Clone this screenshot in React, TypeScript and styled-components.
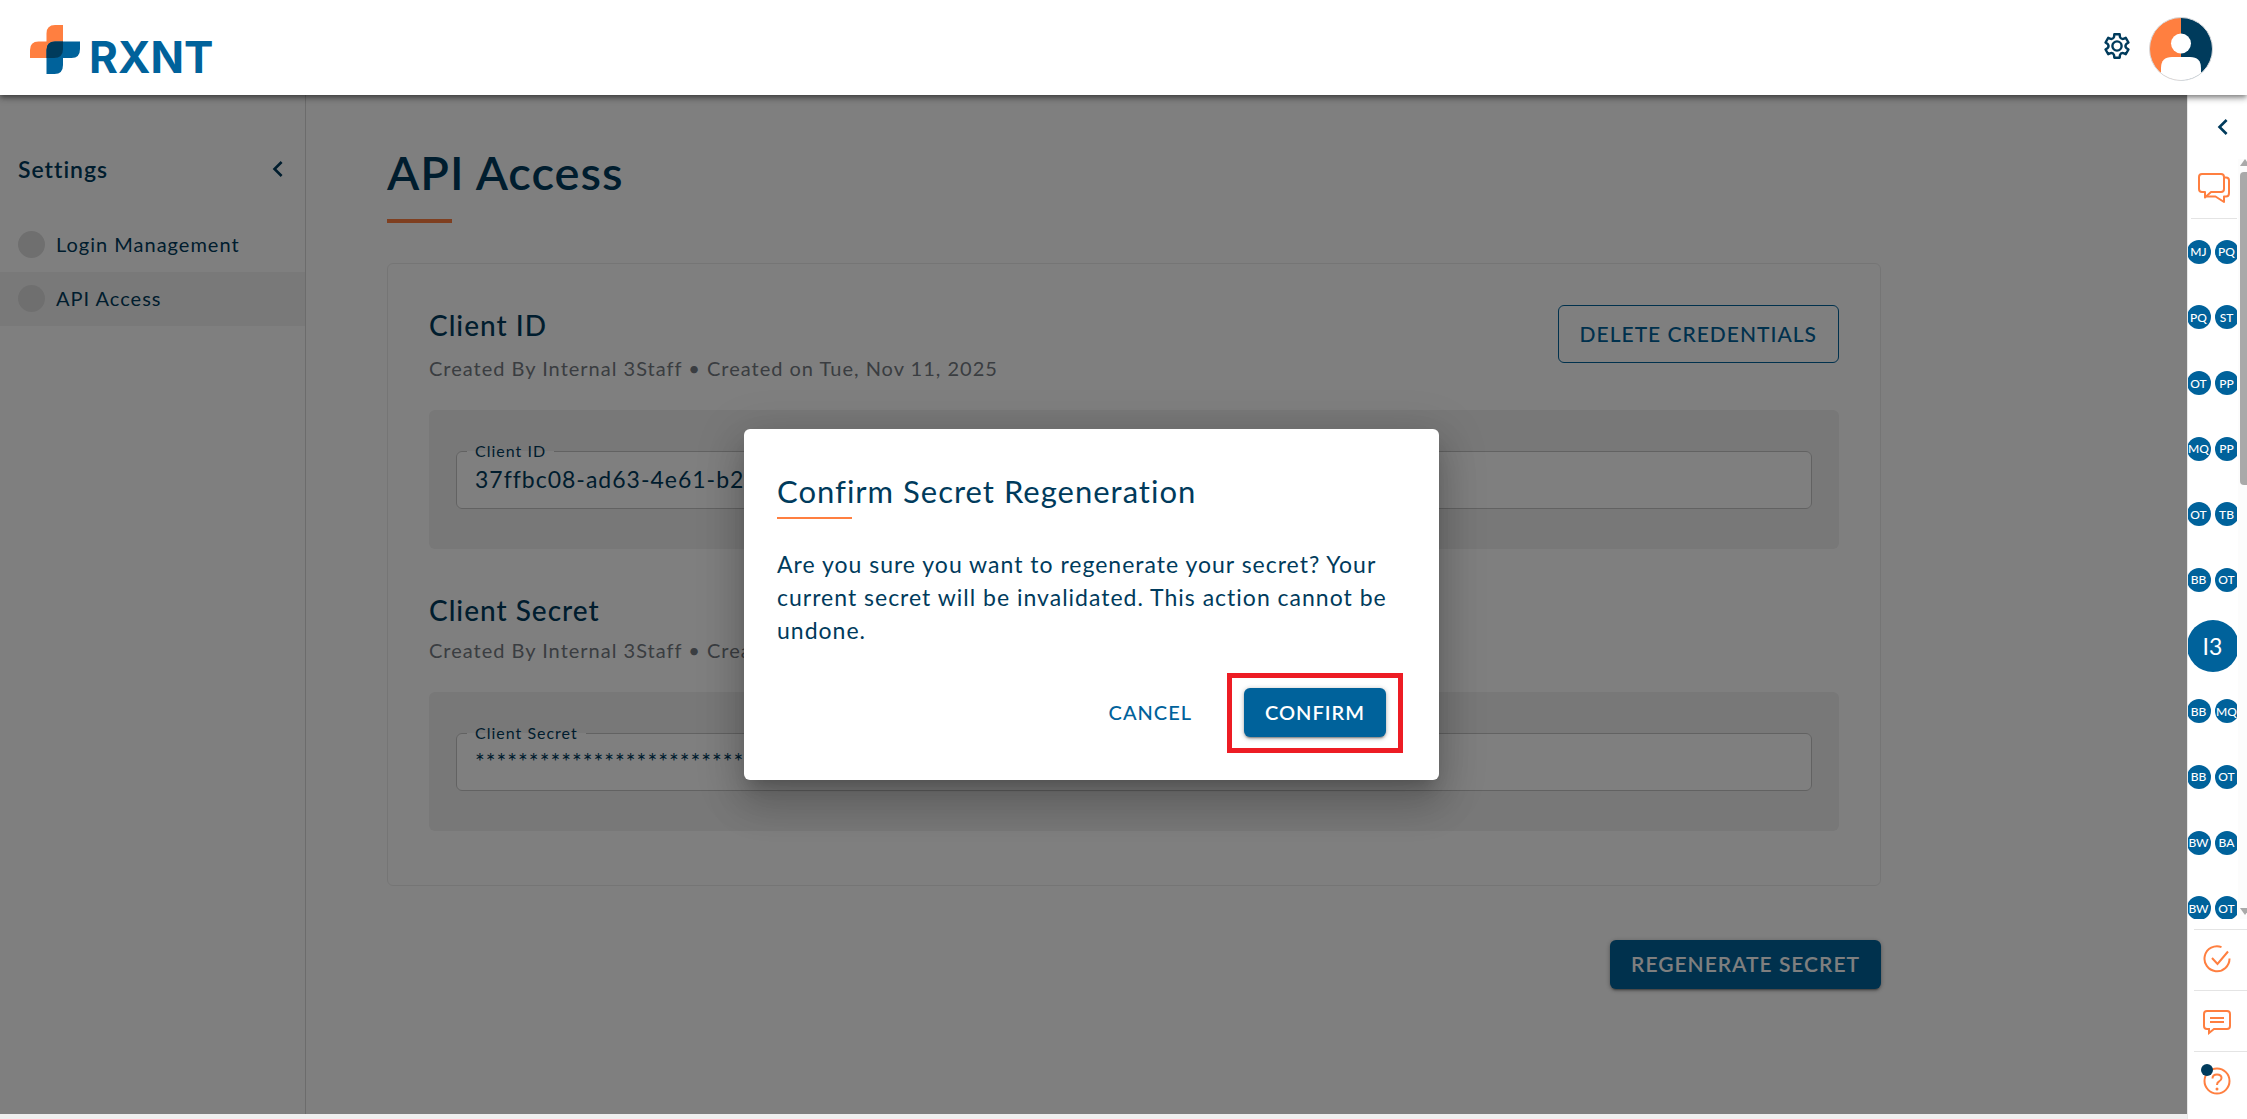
import React from "react";
import styled, { createGlobalStyle, css } from "styled-components";
import { MdChevronLeft } from "react-icons/md";

const color = {
  navy: "#003b5c",
  blue: "#00629b",
  orange: "#ff7f40",
  muted: "#747a82",
  line: "#e4e4e4",
  panel: "#f0f0f0",
};

const GlobalStyle = createGlobalStyle`
  *, *::before, *::after { box-sizing: border-box; }
  body {
    margin: 0;
    background: #efefef;
    color: ${color.navy};
    font-family: Lato, "Open Sans", "Liberation Sans", sans-serif;
    font-size: 20px;
    letter-spacing: 1px;
  }
  button, input { font: inherit; letter-spacing: inherit; }
  h1, h2, h3, p, ul { margin: 0; padding: 0; }
`;

const Page = styled.div`
  display: flex;
  flex-direction: column;
  min-height: 100vh;
`;

const Header = styled.header`
  display: flex;
  align-items: center;
  justify-content: space-between;
  height: 95px;
  padding: 0 34px 0 30px;
  background: #fff;
  position: relative;
  z-index: 3;
  box-shadow: 0 2px 4px -1px rgba(0, 0, 0, 0.3), 0 4px 5px rgba(0, 0, 0, 0.2), 0 1px 10px rgba(0, 0, 0, 0.2);
`;

const Brand = styled.a`
  display: flex;
  align-items: center;
  gap: 9px;
  padding-top: 4px;
  text-decoration: none;
`;

const BrandName = styled.span`
  padding-top: 16px;
  color: ${color.blue};
  font-family: Inter, sans-serif;
  font-size: 44px;
  font-weight: 700;
  line-height: 49px;
  letter-spacing: normal;
`;

const HeaderActions = styled.div`
  display: flex;
  align-items: flex-start;
  gap: 17px;
  padding-top: 3px;
`;

const IconButton = styled.button<{ $color?: string }>`
  display: flex;
  align-items: center;
  justify-content: center;
  padding: 0;
  border: 0;
  background: none;
  color: ${(p) => p.$color ?? color.navy};
  cursor: pointer;
`;

const SettingsButton = styled(IconButton)`
  height: 58px;
`;

const Body = styled.div`
  display: flex;
  flex: 1;
`;

const Workspace = styled.div`
  display: flex;
  flex: 1;
  position: relative;
  margin-bottom: 5px;
  background: #fff;
`;

const Sidebar = styled.nav`
  width: 306px;
  border-right: 1px solid #d8d8d8;
`;

const SidebarHead = styled.div`
  display: flex;
  align-items: center;
  justify-content: space-between;
  height: 123px;
  padding: 24px 11px 0 18px;
`;

const SidebarTitle = styled.h2`
  font-size: 23px;
  font-weight: 600;
`;

const NavList = styled.ul`
  list-style: none;
`;

const NavLink = styled.a<{ $active?: boolean }>`
  display: flex;
  align-items: center;
  gap: 11px;
  height: 54px;
  padding: 0 18px 2px;
  color: ${color.navy};
  background: ${(p) => (p.$active ? "#f3f3f3" : "transparent")};
  text-decoration: none;

  &::before {
    content: "";
    width: 27px;
    height: 27px;
    border-radius: 50%;
    background: #dedede;
  }
`;

const Main = styled.main`
  flex: 1;
  padding: 44px 306px 0 81px;
`;

const PageTitle = styled.h1`
  font-size: 47px;
  font-weight: 600;
  line-height: 66px;

  &::after {
    content: "";
    display: block;
    width: 65px;
    height: 4px;
    margin-top: 14px;
    background: ${color.orange};
  }
`;

const Card = styled.section`
  margin-top: 40px;
  padding: 41px 41px 62px;
  border: 1px solid #ebebeb;
  border-radius: 6px;
  height: 623px;
`;

const CredentialHead = styled.div<{ $height: number }>`
  display: flex;
  align-items: flex-start;
  justify-content: space-between;
  height: ${(p) => p.$height}px;
`;

const CredentialTitle = styled.h2`
  font-size: 28px;
  font-weight: 500;
  line-height: 40px;
`;

const Meta = styled.p`
  color: ${color.muted};
  line-height: 30px;
`;

const HeadText = styled.div<{ $gap: number }>`
  display: flex;
  flex-direction: column;
  gap: ${(p) => p.$gap}px;
`;

const Panel = styled.div`
  height: 139px;
  padding: 31px 27px 0;
  border-radius: 6px;
  background: ${color.panel};
  & + * { margin-top: 41px; }
`;

const Field = styled.fieldset`
  height: 68px;
  min-width: 0;
  margin: 0;
  padding: 0 18px;
  border: 1px solid #c4c4c4;
  border-radius: 6px;
  background: #fff;
`;

const FieldLegend = styled.legend`
  margin-left: -8px;
  padding: 0 8px;
  font-size: 16px;
  line-height: 20px;
`;

const FieldInput = styled.input`
  width: 100%;
  height: 38px;
  padding: 0 0 2px;
  border: 0;
  outline: 0;
  background: transparent;
  color: ${color.navy};
  font-size: 23px;
`;

const Button = styled.button<{ $variant: "outlined" | "contained" | "text"; $large?: boolean }>`
  display: flex;
  align-items: center;
  justify-content: center;
  height: 49px;
  padding: 0 21px 2px;
  border: 0;
  border-radius: 6px;
  font-size: ${(p) => (p.$large ? 21 : 20)}px;
  font-weight: 500;
  text-transform: uppercase;
  white-space: nowrap;
  cursor: pointer;

  ${(p) =>
    p.$variant === "contained" &&
    css`
      background: ${color.blue};
      color: #fff;
      font-weight: 600;
      box-shadow: 0 3px 1px -2px rgba(0, 0, 0, 0.2), 0 2px 2px rgba(0, 0, 0, 0.14), 0 1px 5px rgba(0, 0, 0, 0.3);
    `}
  ${(p) =>
    p.$variant === "outlined" &&
    css`
      height: 58px;
      border: 1px solid ${color.blue};
      background: transparent;
      color: ${color.blue};
    `}
  ${(p) =>
    p.$variant === "text" &&
    css`
      background: transparent;
      color: ${color.blue};
    `}
`;

const PageActions = styled.div`
  display: flex;
  justify-content: flex-end;
  margin-top: 54px;
`;

const Backdrop = styled.div`
  position: absolute;
  inset: 0;
  z-index: 2;
  display: flex;
  align-items: center;
  justify-content: center;
  padding-right: 4px;
  background: rgba(0, 0, 0, 0.5);
`;

const Dialog = styled.div`
  width: 695px;
  padding: 40px 36px 27px 33px;
  border-radius: 6px;
  background: #fff;
  box-shadow: 0 11px 15px -7px rgba(0, 0, 0, 0.2), 0 24px 38px 3px rgba(0, 0, 0, 0.14),
    0 9px 46px 8px rgba(0, 0, 0, 0.12);
`;

const DialogTitle = styled.h3`
  font-size: 31px;
  font-weight: 400;
  line-height: 44px;

  &::after {
    content: "";
    display: block;
    width: 75px;
    height: 2px;
    margin-top: 4px;
    background: ${color.orange};
  }
`;

const DialogText = styled.p`
  margin-top: 29px;
  font-size: 23px;
  line-height: 33px;
`;

const DialogActions = styled.div`
  display: flex;
  align-items: center;
  justify-content: flex-end;
  gap: 14px;
  margin-top: 26px;
`;

const Highlight = styled.div`
  padding: 10px 12px 11px;
  border: 5px solid #ed1c24;
`;

const Rail = styled.aside`
  display: flex;
  flex-direction: column;
  width: 60px;
  border-left: 1px solid #e8e8e8;
  background: #fff;
`;

const RailHead = styled.div`
  display: flex;
  align-items: center;
  justify-content: flex-end;
  height: 64px;
  padding-right: 8px;
`;

const RailScroll = styled.div`
  display: grid;
  grid-template-columns: 1fr 10px;
  height: 760px;
  overflow: hidden;
`;

const RailList = styled.div`
  overflow: hidden;
`;

const RailChat = styled.div`
  display: flex;
  justify-content: center;
  height: 60px;
  margin-left: 3px;
  padding: 13px 0 0;
  border-bottom: 1px solid ${color.line};
`;

const AvatarRows = styled.div`
  display: grid;
  grid-template-columns: minmax(0, 1fr);
  grid-template-rows: repeat(11, 1fr);
  height: 722px;
`;

const AvatarRow = styled.div`
  display: flex;
  align-items: center;
  justify-content: center;
  gap: 4px;
`;

const Avatar = styled.button<{ $large?: boolean }>`
  flex: none;
  display: flex;
  align-items: center;
  justify-content: center;
  width: ${(p) => (p.$large ? 52 : 24)}px;
  height: ${(p) => (p.$large ? 52 : 24)}px;
  padding: 0;
  border: 0;
  border-radius: 50%;
  background: ${color.blue};
  color: #fff;
  font-size: ${(p) => (p.$large ? 23 : 12)}px;
  font-weight: ${(p) => (p.$large ? 400 : 500)};
  letter-spacing: normal;
`;

const ScrollTrack = styled.div`
  display: flex;
  flex-direction: column;
  align-items: center;
  justify-content: space-between;
  margin-left: 1px;
  padding-bottom: 4px;
  background: #fcfcfc;
`;

const ScrollTop = styled.div`
  display: flex;
  flex-direction: column;
  align-items: center;
  gap: 6px;
`;

const Arrow = styled.span<{ $down?: boolean }>`
  margin-left: 4px;
  border: 5px solid transparent;
  border-top-width: ${(p) => (p.$down ? 7 : 0)}px;
  border-bottom-width: ${(p) => (p.$down ? 0 : 7)}px;
  border-top-color: #a9a9a9;
  border-bottom-color: #a9a9a9;
`;

const ScrollThumb = styled.span`
  width: 8px;
  height: 313px;
  margin-left: 3px;
  border-radius: 4px 0 0 4px;
  background: #a9a9a9;
`;

const RailTools = styled.div`
  flex: 1;
  padding: 10px 0 0 6px;
`;

const RailTool = styled(IconButton)`
  width: 100%;
  height: 61px;
  padding: 0 7px 3px 0;
  border-top: 1px solid ${color.line};
`;

const LogoMark = () => (
  <svg width="50" height="49" viewBox="0 0 50 49" aria-hidden="true">
    <path d="M0 33V25Q0 16.500 8.500 16.500H16.500V8.500Q16.500 0 25 0H33V24Q33 33 24 33Z" fill={color.orange} />
    <path d="M16.500 49V25Q16.500 16.500 25 16.500H50V24Q50 33 41.500 33H33V40Q33 49 24.500 49Z" fill={color.blue} />
    <path d="M16.500 33V25Q16.500 16.500 25 16.500H33V24Q33 33 24 33Z" fill={color.navy} />
  </svg>
);

const polar = (degrees: number, radius: number) => {
  const angle = ((degrees - 90) * Math.PI) / 180;
  return `${(15 + radius * Math.cos(angle)).toFixed(2)} ${(15 + radius * Math.sin(angle)).toFixed(2)}`;
};

const gearOutline =
  [0, 60, 120, 180, 240, 300]
    .map(
      (a, i) =>
        `${i === 0 ? "M" : "L"}${polar(a - 18, 9.5)}L${polar(a - 13, 12)}L${polar(a + 13, 12)}L${polar(
          a + 18,
          9.5
        )}Q${polar(a + 30, 7.6)} ${polar(a + 42, 9.5)}`
    )
    .join("") + "Z";

const GearIcon = () => (
  <svg width="30" height="30" viewBox="0 0 30 30" fill="none" stroke={color.navy} strokeWidth="2.400" strokeLinejoin="round" aria-hidden="true">
    <path d={gearOutline} />
    <circle cx="15" cy="15" r="4.600" />
  </svg>
);

const ProfilePicture = () => (
  <svg width="64" height="64" viewBox="0 0 64 64" aria-hidden="true">
    <defs>
      <clipPath id="profile-disc">
        <circle cx="32" cy="32" r="31.500" />
      </clipPath>
    </defs>
    <g clipPath="url(#profile-disc)">
      <rect width="32" height="64" fill={color.orange} />
      <rect x="32" width="32" height="64" fill={color.navy} />
      <circle cx="32" cy="26.500" r="10" fill="#fff" />
      <path d="M12 64V51Q12 40 23 40H41Q52 40 52 51V64Z" fill="#fff" />
    </g>
    <circle cx="32" cy="32" r="31.500" fill="none" stroke="#d6d9dc" />
  </svg>
);

const ChatsIcon = () => (
  <svg width="34" height="32" viewBox="0 0 34 32" fill="none" stroke={color.orange} strokeWidth="2" strokeLinejoin="round" aria-hidden="true">
    <path d="M5 2H24Q27 2 27 5V17Q27 20 24 20H14L8 25.500V20H5Q2 20 2 17V5Q2 2 5 2Z" />
    <path d="M27 5.500H29Q32 5.500 32 8.500V21Q32 24.500 29 24.500H27V30L18.500 24.500H9.500" />
  </svg>
);

const DoneIcon = () => (
  <svg width="28" height="28" viewBox="0 0 28 28" fill="none" stroke={color.orange} strokeWidth="2" aria-hidden="true">
    <path d="M18.500 2.100A12.500 12.500 0 1 0 26.500 13.500" />
    <path d="M9 13L14.500 19L25 6.500" />
  </svg>
);

const CommentIcon = () => (
  <svg width="28" height="30" viewBox="0 -4 28 30" fill="none" stroke={color.orange} strokeWidth="2" aria-hidden="true">
    <path d="M4 2H24Q27 2 27 5V17Q27 20 24 20H11L6 24V20H4Q1 20 1 17V5Q1 2 4 2Z" />
    <path d="M7 9H21M7 13H21" />
  </svg>
);

const HelpIcon = () => (
  <svg width="34" height="34" viewBox="0 1 34 34" fill="none" aria-hidden="true">
    <circle cx="17" cy="18" r="12.500" stroke={color.orange} strokeWidth="2" />
    <path d="M12.500 15.500Q12.500 11.500 17 11.500Q21.500 11.500 21.500 15Q21.500 17 19 18.500Q17 19.500 17 22" stroke={color.orange} strokeWidth="2" />
    <circle cx="17" cy="26" r="1.500" fill={color.orange} />
    <circle cx="7" cy="7" r="6" fill={color.navy} />
  </svg>
);

interface CredentialProps {
  id: string;
  title: string;
  value: string;
  gap: number;
  headHeight: number;
  action?: React.ReactNode;
}

const Credential = ({ id, title, value, gap, headHeight, action }: CredentialProps) => (
  <>
    <CredentialHead $height={headHeight}>
      <HeadText $gap={gap}>
        <CredentialTitle>{title}</CredentialTitle>
        <Meta>Created By Internal 3Staff • Created on Tue, Nov 11, 2025</Meta>
      </HeadText>
      {action}
    </CredentialHead>
    <Panel>
      <Field>
        <FieldLegend>
          <label htmlFor={id}>{title}</label>
        </FieldLegend>
        <FieldInput id={id} value={value} readOnly />
      </Field>
    </Panel>
  </>
);

const contacts = [
  ["MJ", "PQ"],
  ["PQ", "ST"],
  ["OT", "PP"],
  ["MQ", "PP"],
  ["OT", "TB"],
  ["BB", "OT"],
  ["I3"],
  ["BB", "MQ"],
  ["BB", "OT"],
  ["BW", "BA"],
  ["BW", "OT"],
];

export default function App() {
  return (
    <Page>
      <GlobalStyle />
      <Header>
        <Brand href="#">
          <LogoMark />
          <BrandName>RXNT</BrandName>
        </Brand>
        <HeaderActions>
          <SettingsButton aria-label="Settings">
            <GearIcon />
          </SettingsButton>
          <IconButton aria-label="Profile">
            <ProfilePicture />
          </IconButton>
        </HeaderActions>
      </Header>
      <Body>
        <Workspace>
          <Sidebar>
            <SidebarHead>
              <SidebarTitle>Settings</SidebarTitle>
              <IconButton aria-label="Collapse settings">
                <MdChevronLeft size={32} />
              </IconButton>
            </SidebarHead>
            <NavList>
              <li>
                <NavLink href="#login">Login Management</NavLink>
              </li>
              <li>
                <NavLink href="#api" $active>
                  API Access
                </NavLink>
              </li>
            </NavList>
          </Sidebar>
          <Main>
            <PageTitle>API Access</PageTitle>
            <Card>
              <Credential
                id="client-id"
                title="Client ID"
                value="37ffbc08-ad63-4e61-b27"
                gap={8}
                headHeight={105}
                action={
                  <Button $variant="outlined" $large>
                    Delete Credentials
                  </Button>
                }
              />
              <Credential
                id="client-secret"
                title="Client Secret"
                value={"*".repeat(28)}
                gap={5}
                headHeight={102}
              />
            </Card>
            <PageActions>
              <Button $variant="contained" $large>
                Regenerate Secret
              </Button>
            </PageActions>
          </Main>
          <Backdrop>
            <Dialog role="dialog" aria-modal="true" aria-labelledby="dialog-title">
              <DialogTitle id="dialog-title">Confirm Secret Regeneration</DialogTitle>
              <DialogText>
                Are you sure you want to regenerate your secret? Your current secret will be invalidated. This action
                cannot be undone.
              </DialogText>
              <DialogActions>
                <Button $variant="text">Cancel</Button>
                <Highlight>
                  <Button $variant="contained">Confirm</Button>
                </Highlight>
              </DialogActions>
            </Dialog>
          </Backdrop>
        </Workspace>
        <Rail>
          <RailHead>
            <IconButton aria-label="Expand panel">
              <MdChevronLeft size={32} />
            </IconButton>
          </RailHead>
          <RailScroll>
            <RailList>
              <RailChat>
                <ChatsIcon />
              </RailChat>
              <AvatarRows>
                {contacts.map((row, i) => (
                  <AvatarRow key={i}>
                    {row.map((initials) => (
                      <Avatar key={initials} $large={row.length === 1}>
                        {initials}
                      </Avatar>
                    ))}
                  </AvatarRow>
                ))}
              </AvatarRows>
            </RailList>
            <ScrollTrack>
              <ScrollTop>
                <Arrow />
                <ScrollThumb />
              </ScrollTop>
              <Arrow $down />
            </ScrollTrack>
          </RailScroll>
          <RailTools>
            <RailTool aria-label="Tasks">
              <DoneIcon />
            </RailTool>
            <RailTool aria-label="Comments">
              <CommentIcon />
            </RailTool>
            <RailTool aria-label="Help">
              <HelpIcon />
            </RailTool>
          </RailTools>
        </Rail>
      </Body>
    </Page>
  );
}
